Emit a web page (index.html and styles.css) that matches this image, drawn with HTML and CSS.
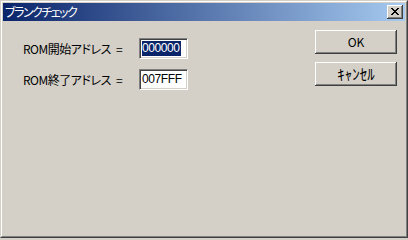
FILE: index.html
```html
<!DOCTYPE html>
<html lang="ja">
<head>
<meta charset="utf-8">
<title>ブランクチェック</title>
<link rel="stylesheet" href="styles.css">
</head>
<body>
<div class="window">
  <div class="frame">
    <div class="titlebar">
      <span class="title">ブランクチェック</span>
      <div class="close">
        <svg width="8" height="7" viewBox="0 0 8 7" shape-rendering="crispEdges">
          <path d="M0 0h2v1H0zM6 0h2v1H6zM1 1h2v1H1zM5 1h2v1H5zM2 2h4v1H2zM3 3h2v1H3zM2 4h4v1H2zM1 5h2v1H1zM5 5h2v1H5zM0 6h2v1H0zM6 6h2v1H6z" fill="#000"/>
        </svg>
      </div>
    </div>
    <div class="client">
      <div class="form">
        <span class="label">ROM開始アドレス =</span>
        <div class="edit"><span class="sel">000000</span></div>
        <span class="label">ROM終了アドレス =</span>
        <div class="edit"><span>007FFF</span></div>
      </div>
      <div class="buttons">
        <div class="btn">OK</div>
        <div class="btn btn-kana">ｷｬﾝｾﾙ</div>
      </div>
    </div>
  </div>
</div>
</body>
</html>
```
FILE: styles.css
```css
html, body {
  margin: 0;
  padding: 0;
  background: #D4D0C8;
}
.window {
  width: 408px;
  height: 238px;
  box-sizing: border-box;
  border: 1px solid;
  border-color: #D4D0C8 #404040 #404040 #D4D0C8;
  background: #D4D0C8;
}
.frame {
  height: 100%;
  box-sizing: border-box;
  border: 1px solid;
  border-color: #FFFFFF #808080 #808080 #FFFFFF;
  padding: 1px;
  display: flex;
  flex-direction: column;
}
.titlebar {
  height: 18px;
  flex: none;
  background: linear-gradient(to right, #0A246A, #A6CAF0);
  display: flex;
  align-items: center;
  padding: 0 2px 0 2px;
  margin-bottom: 1px;
}
.title {
  color: #FFFFFF;
  font-family: "Noto Sans CJK JP", sans-serif;
  font-size: 12px;
  font-feature-settings: "palt";
  line-height: 18px;
  letter-spacing: -1.5px;
}
.close {
  margin-left: auto;
  width: 16px;
  height: 14px;
  box-sizing: border-box;
  background: #D4D0C8;
  box-shadow: inset -1px -1px 0 #404040, inset 1px 1px 0 #FFFFFF, inset -2px -2px 0 #808080;
  display: flex;
  align-items: center;
  justify-content: center;
  padding: 0 1px 1px 0;
}
.close svg { display: block; }
.client {
  flex: 1;
  display: flex;
  align-items: flex-start;
  padding: 16px 8px 0 20px;
  font-family: "Noto Sans CJK JP", sans-serif;
  font-size: 12px;
  color: #000000;
}
.form {
  display: grid;
  grid-template-columns: 116px 49px;
  row-gap: 10px;
  align-items: center;
}
.label {
  font-feature-settings: "palt";
  line-height: 14px;
  white-space: pre;
  letter-spacing: -0.5px;
  word-spacing: 3px;
}
.edit {
  height: 21px;
  box-sizing: border-box;
  background: #FFFFFF;
  border: 1px solid;
  border-color: #808080 #FFFFFF #FFFFFF #808080;
  box-shadow: inset 1px 1px 0 #404040, inset -1px -1px 0 #D4D0C8;
  padding: 2px 0 0 2px;
  font-family: "Liberation Sans", Arial, sans-serif;
  font-size: 12px;
  line-height: 16px;
  display: flex;
  align-items: flex-start;
}
.edit span {
  display: block;
  line-height: 15px;
  height: 15px;
  letter-spacing: -0.4px;
}
.edit .sel {
  background: #0A246A;
  color: #FFFFFF;
  padding-right: 1px;
}
.buttons {
  margin-left: auto;
  margin-top: -8px;
  display: flex;
  flex-direction: column;
  gap: 8px;
}
.btn {
  width: 82px;
  height: 24px;
  box-sizing: border-box;
  background: #D4D0C8;
  box-shadow: inset -1px -1px 0 #404040, inset 1px 1px 0 #FFFFFF, inset -2px -2px 0 #808080;
  display: flex;
  align-items: center;
  justify-content: center;
  font-size: 12px;
  line-height: 14px;
  padding-bottom: 1px;
}
.btn-kana {
  font-size: 15px;
  line-height: 16px;
}
```
